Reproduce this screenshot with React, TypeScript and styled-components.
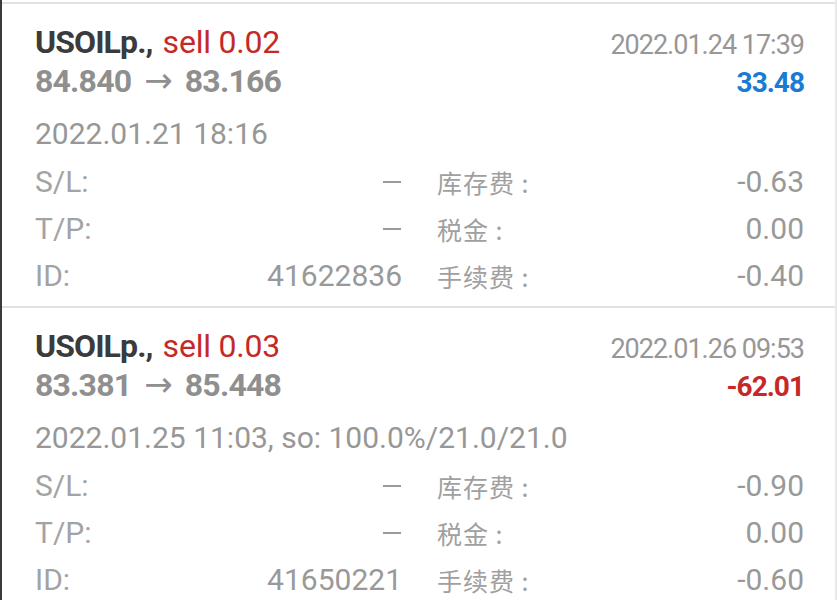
import styled, { createGlobalStyle } from "styled-components";

const GlobalStyle = createGlobalStyle`
  html, body {
    margin: 0;
    padding: 0;
    background: #ffffff;
  }
  body {
    font-family: Roboto, "Noto Sans CJK SC", sans-serif;
    -webkit-font-smoothing: antialiased;
  }
`;

const Page = styled.div`
  width: 837px;
  height: 600px;
  box-sizing: border-box;
  border-left: 2px solid #3a3a3a;
  border-right: 2px solid #e8e8e8;
  padding-top: 2px;
  overflow: hidden;
  background: #ffffff;
`;

const Card = styled.section`
  border-top: 2px solid #e2e2e2;
  padding: 19px 31px 7px 33px;
`;

const Header = styled.div`
  display: flex;
  justify-content: space-between;
  align-items: flex-start;
`;

const Left = styled.div`
  display: flex;
  flex-direction: column;
`;

const Right = styled.div`
  display: flex;
  flex-direction: column;
  align-items: flex-end;
`;

const Title = styled.div`
  font-size: 32px;
  line-height: 38px;
  font-weight: 700;
  color: #3b3b3b;
  letter-spacing: -0.9px;
  white-space: nowrap;
`;

const Side = styled.span`
  font-weight: 400;
  color: #c62828;
  letter-spacing: -0.2px;
  margin-left: 3px;
`;

const Prices = styled.div`
  font-size: 32px;
  line-height: 38px;
  font-weight: 700;
  color: #8f8f8f;
  letter-spacing: -0.8px;
  white-space: nowrap;
`;

const Arrow = styled.span`
  font-weight: 400;
  font-family: "DejaVu Sans", sans-serif;
  font-size: 34px;
  margin: 0 12px 0 13px;
  letter-spacing: 0;
`;

const CloseTime = styled.div`
  font-size: 27px;
  line-height: 38px;
  margin-top: 3px;
  color: #979797;
  letter-spacing: -1px;
`;

const Profit = styled.div<{ $loss?: boolean }>`
  font-size: 28px;
  line-height: 34px;
  margin-top: 2px;
  font-weight: 700;
  color: ${(p) => (p.$loss ? "#c62828" : "#1a7bd4")};
  letter-spacing: -1px;
`;

const Meta = styled.div`
  margin-top: 10px;
  font-size: 30px;
  line-height: 48px;
  color: #979797;
  white-space: nowrap;
`;

const Details = styled.div`
  display: grid;
  grid-template-columns: 1fr 1fr;
  column-gap: 35px;
  grid-auto-rows: 47px;
`;

const Field = styled.div`
  display: flex;
  justify-content: space-between;
  align-items: center;
  font-size: 30px;
  color: #a3a3a3;
`;

const Label = styled.span`
  font-family: Roboto, "Noto Sans CJK SC", sans-serif;
`;

const CnLabel = styled.span`
  font-family: "Noto Sans CJK SC", sans-serif;
  font-size: 25px;
  color: #a0a0a0;
  letter-spacing: 1px;
`;

const Value = styled.span`
  color: #999999;
`;

const Dash = styled.span`
  display: inline-block;
  width: 18px;
  height: 2px;
  margin-right: 1px;
  background: #9a9a9a;
`;

interface Deal {
  symbol: string;
  side: string;
  open: string;
  close: string;
  closeTime: string;
  profit: string;
  meta: string;
  sl: string;
  tp: string;
  id: string;
  swap: string;
  tax: string;
  fee: string;
}

const deals: Deal[] = [
  {
    symbol: "USOILp.,",
    side: "sell 0.02",
    open: "84.840",
    close: "83.166",
    closeTime: "2022.01.24 17:39",
    profit: "33.48",
    meta: "2022.01.21 18:16",
    sl: "",
    tp: "",
    id: "41622836",
    swap: "-0.63",
    tax: "0.00",
    fee: "-0.40",
  },
  {
    symbol: "USOILp.,",
    side: "sell 0.03",
    open: "83.381",
    close: "85.448",
    closeTime: "2022.01.26 09:53",
    profit: "-62.01",
    meta: "2022.01.25 11:03, so: 100.0%/21.0/21.0",
    sl: "",
    tp: "",
    id: "41650221",
    swap: "-0.90",
    tax: "0.00",
    fee: "-0.60",
  },
];

function Amount({ text }: { text: string }) {
  return text ? <Value>{text}</Value> : <Dash aria-label="—" />;
}

function DealCard({ deal }: { deal: Deal }) {
  return (
    <Card>
      <Header>
        <Left>
          <Title>
            {deal.symbol} <Side>{deal.side}</Side>
          </Title>
          <Prices>
            {deal.open}
            <Arrow>→</Arrow>
            {deal.close}
          </Prices>
        </Left>
        <Right>
          <CloseTime>{deal.closeTime}</CloseTime>
          <Profit $loss={deal.profit.startsWith("-")}>{deal.profit}</Profit>
        </Right>
      </Header>
      <Meta>{deal.meta}</Meta>
      <Details>
        <Field>
          <Label>S/L:</Label>
          <Amount text={deal.sl} />
        </Field>
        <Field>
          <CnLabel>库存费 :</CnLabel>
          <Amount text={deal.swap} />
        </Field>
        <Field>
          <Label>T/P:</Label>
          <Amount text={deal.tp} />
        </Field>
        <Field>
          <CnLabel>税金 :</CnLabel>
          <Amount text={deal.tax} />
        </Field>
        <Field>
          <Label>ID:</Label>
          <Amount text={deal.id} />
        </Field>
        <Field>
          <CnLabel>手续费 :</CnLabel>
          <Amount text={deal.fee} />
        </Field>
      </Details>
    </Card>
  );
}

export default function App() {
  return (
    <>
      <GlobalStyle />
      <Page>
        {deals.map((d) => (
          <DealCard key={d.id} deal={d} />
        ))}
      </Page>
    </>
  );
}
